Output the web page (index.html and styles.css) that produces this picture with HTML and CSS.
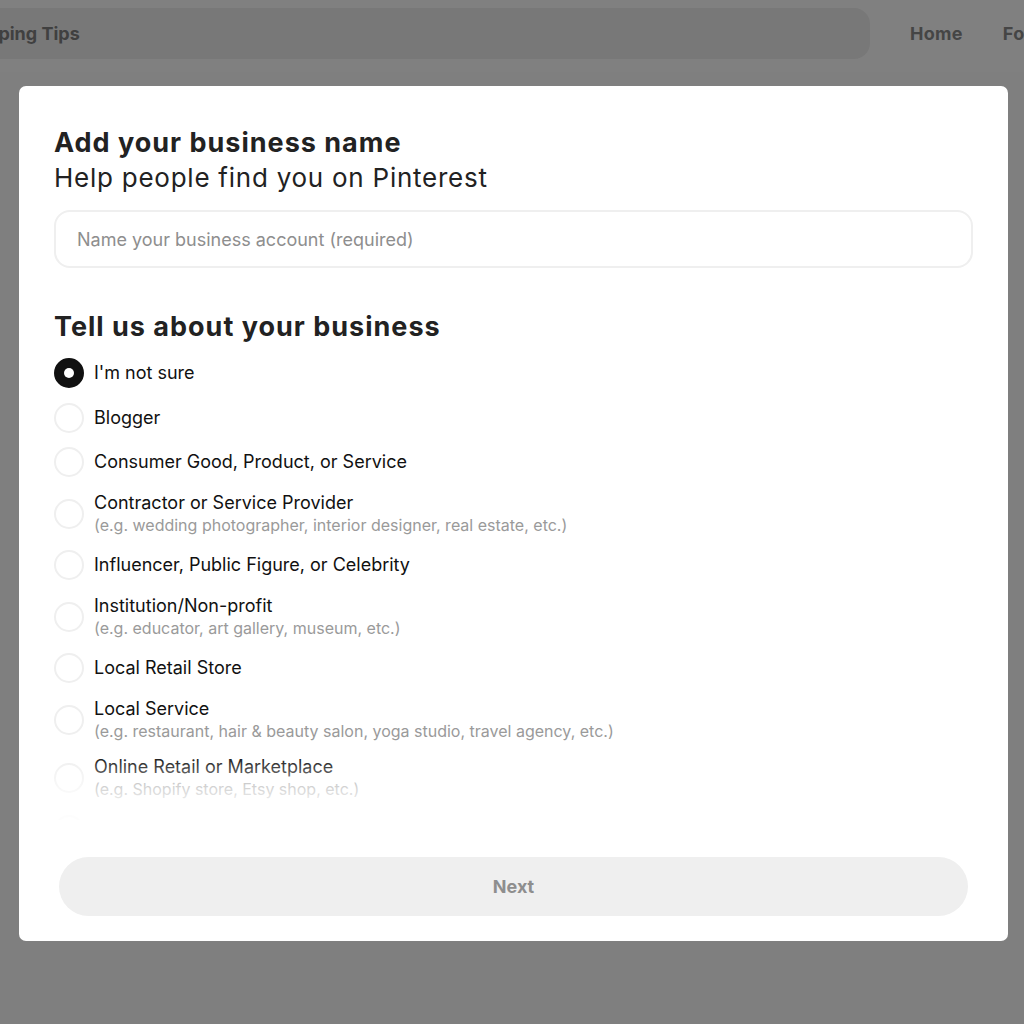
FILE: index.html
```html
<!DOCTYPE html>
<html lang="en">
<head>
<meta charset="utf-8">
<title>Add your business name</title>
<link rel="stylesheet" href="styles.css">
</head>
<body>
<header class="topbar">
  <div class="search-pill">Shopping Tips</div>
  <nav class="nav">
    <span class="nav-item">Home</span>
    <span class="nav-item">Following</span>
  </nav>
</header>
<main class="modal">
  <h1 class="title">Add your business name</h1>
  <p class="subtitle">Help people find you on Pinterest</p>
  <div class="name-input">Name your business account (required)</div>
  <h2 class="section-title">Tell us about your business</h2>
  <div class="list-wrap">
    <ul class="options">
      <li class="option"><span class="radio checked"></span><span class="text"><span class="label">I'm not sure</span></span></li>
      <li class="option"><span class="radio"></span><span class="text"><span class="label">Blogger</span></span></li>
      <li class="option"><span class="radio"></span><span class="text"><span class="label">Consumer Good, Product, or Service</span></span></li>
      <li class="option"><span class="radio"></span><span class="text"><span class="label">Contractor or Service Provider</span><span class="hint">(e.g. wedding photographer, interior designer, real estate, etc.)</span></span></li>
      <li class="option"><span class="radio"></span><span class="text"><span class="label">Influencer, Public Figure, or Celebrity</span></span></li>
      <li class="option"><span class="radio"></span><span class="text"><span class="label">Institution/Non-profit</span><span class="hint">(e.g. educator, art gallery, museum, etc.)</span></span></li>
      <li class="option"><span class="radio"></span><span class="text"><span class="label">Local Retail Store</span></span></li>
      <li class="option"><span class="radio"></span><span class="text"><span class="label">Local Service</span><span class="hint">(e.g. restaurant, hair &amp; beauty salon, yoga studio, travel agency, etc.)</span></span></li>
      <li class="option"><span class="radio"></span><span class="text"><span class="label">Online Retail or Marketplace</span><span class="hint">(e.g. Shopify store, Etsy shop, etc.)</span></span></li>
      <li class="option"><span class="radio"></span><span class="text"><span class="label">Other</span></span></li>
    </ul>
    <div class="fade"></div>
  </div>
  <div class="next-btn">Next</div>
</main>
</body>
</html>
```
FILE: styles.css
```css
* { box-sizing: border-box; }
html, body { margin: 0; padding: 0; }
body {
  width: 1024px;
  height: 1024px;
  overflow: hidden;
  background: #7f7f7f;
  font-family: Inter, "Liberation Sans", Arial, sans-serif;
  color: #111;
}
.topbar {
  height: 72px;
  display: flex;
  align-items: flex-start;
  padding-top: 8px;
  background: #808080;
}
.search-pill {
  flex: 0 0 933px;
  margin-left: -63px;
  height: 51px;
  border-radius: 16px;
  background: #787878;
  padding-left: 16px;
  display: flex;
  align-items: center;
  font-weight: 700;
  font-size: 18px;
  color: #404040;
  white-space: nowrap;
}
.nav {
  display: flex;
  gap: 40px;
  margin-left: 40px;
  height: 51px;
  align-items: center;
  white-space: nowrap;
}
.nav-item {
  font-weight: 700;
  font-size: 18px;
  letter-spacing: 0.3px;
  color: #454545;
}
.modal {
  margin: 14px 0 0 19px;
  width: 989px;
  height: 855px;
  background: #fff;
  border-radius: 7px;
  padding: 41px 35px 25px 35px;
  display: flex;
  flex-direction: column;
}
.title {
  margin: 0;
  font-size: 27px;
  line-height: 32px;
  font-weight: 700;
  letter-spacing: 1px;
  color: #222;
}
.subtitle {
  margin: 3px 0 0;
  font-size: 26px;
  line-height: 32px;
  font-weight: 400;
  letter-spacing: 0.75px;
  color: #222;
}
.name-input {
  margin-top: 16px;
  height: 58px;
  width: 919px;
  border: 2px solid #efefef;
  border-radius: 16px;
  padding-left: 21px;
  display: flex;
  align-items: center;
  font-size: 18px;
  color: #8e8e8e;
}
.section-title {
  margin: 43px 0 0;
  font-size: 27px;
  line-height: 32px;
  font-weight: 700;
  letter-spacing: 1px;
  color: #222;
}
.list-wrap {
  position: relative;
  margin-top: 15px;
  height: 462px;
  overflow: hidden;
}
.options {
  list-style: none;
  margin: 0;
  padding: 0;
  display: flex;
  flex-direction: column;
  gap: 14.5px;
}
.option {
  display: flex;
  align-items: center;
  gap: 10px;
  min-height: 30px;
}
.radio {
  flex: 0 0 30px;
  width: 30px;
  height: 30px;
  border-radius: 50%;
  border: 2px solid #efefef;
  display: flex;
  align-items: center;
  justify-content: center;
}
.radio.checked {
  background: #111;
  border-color: #111;
}
.radio.checked::after {
  content: "";
  width: 10px;
  height: 10px;
  border-radius: 50%;
  background: #fff;
}
.text {
  display: flex;
  flex-direction: column;
}
.label {
  font-size: 18px;
  line-height: 22px;
  color: #111;
}
.hint {
  font-size: 16px;
  line-height: 22px;
  color: #9a9a9a;
}
.fade {
  position: absolute;
  left: 0;
  right: 0;
  bottom: 0;
  height: 65px;
  background: linear-gradient(to bottom, rgba(255,255,255,0), rgba(255,255,255,0.4) 35%, rgba(255,255,255,0.8) 70%, rgba(255,255,255,0.9));
}
.next-btn {
  margin: auto 5px 0 5px;
  height: 59px;
  border-radius: 30px;
  background: #efefef;
  display: flex;
  align-items: center;
  justify-content: center;
  font-weight: 700;
  font-size: 18px;
  color: #8e8e8e;
}
```
